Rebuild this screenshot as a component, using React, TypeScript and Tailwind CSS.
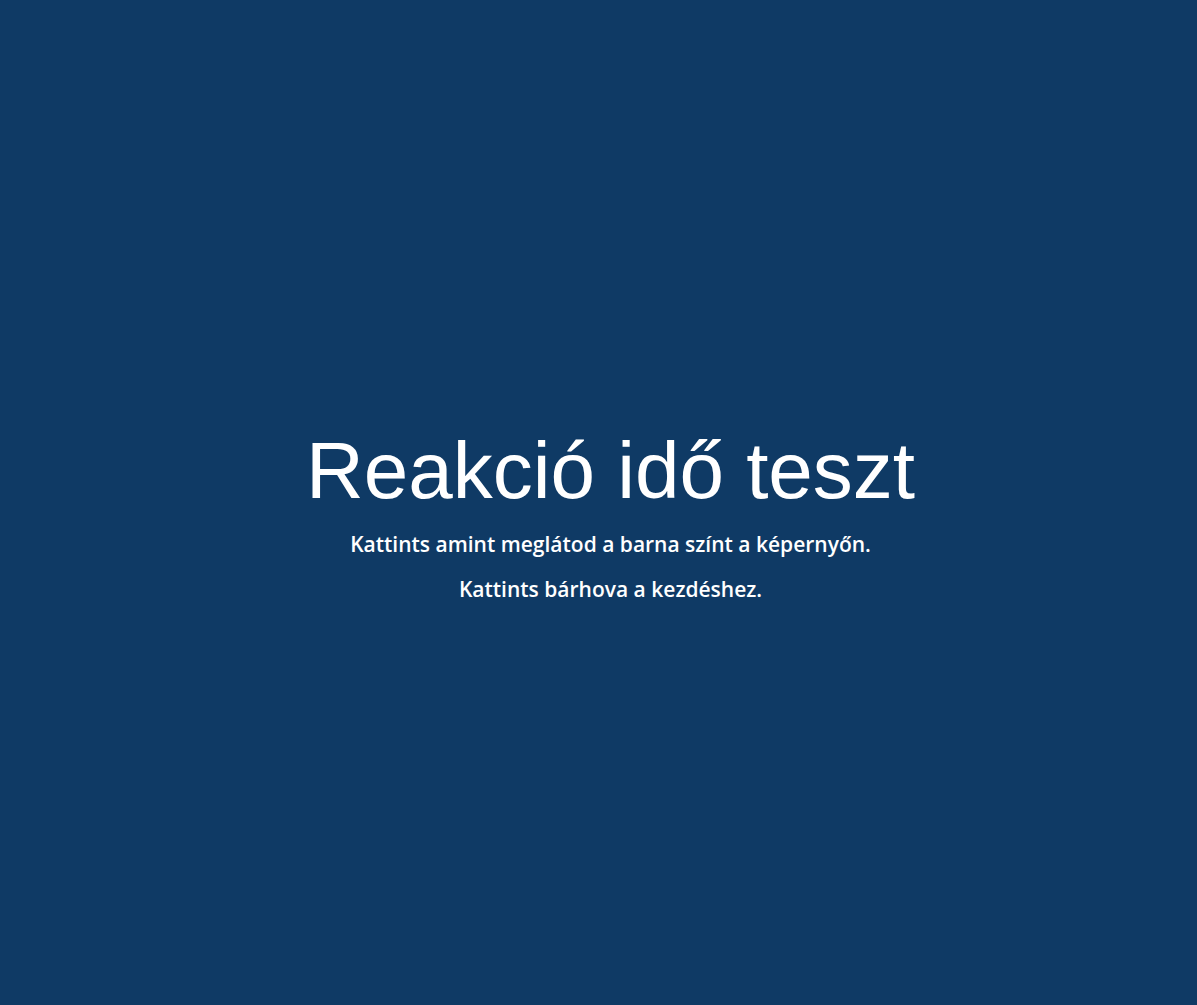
import React from 'react';

const App: React.FC = () => {
    return (
        <div className="w-full h-[1005px] bg-[#0f3a65] flex flex-col items-center justify-center pl-6 pt-[26px] text-white cursor-pointer select-none">
            <h1 className="text-[80px] leading-none font-['Liberation_Sans',Arial,sans-serif]">
                Reakció idő teszt
            </h1>
            <p className="mt-[23px] text-[21px] leading-none font-semibold font-['Open_Sans','Noto_Sans',sans-serif]">
                Kattints amint meglátod a barna színt a képernyőn.
            </p>
            <p className="mt-[24px] text-[21px] leading-none font-semibold font-['Open_Sans','Noto_Sans',sans-serif]">
                Kattints bárhova a kezdéshez.
            </p>
        </div>
    );
};

export default App;
